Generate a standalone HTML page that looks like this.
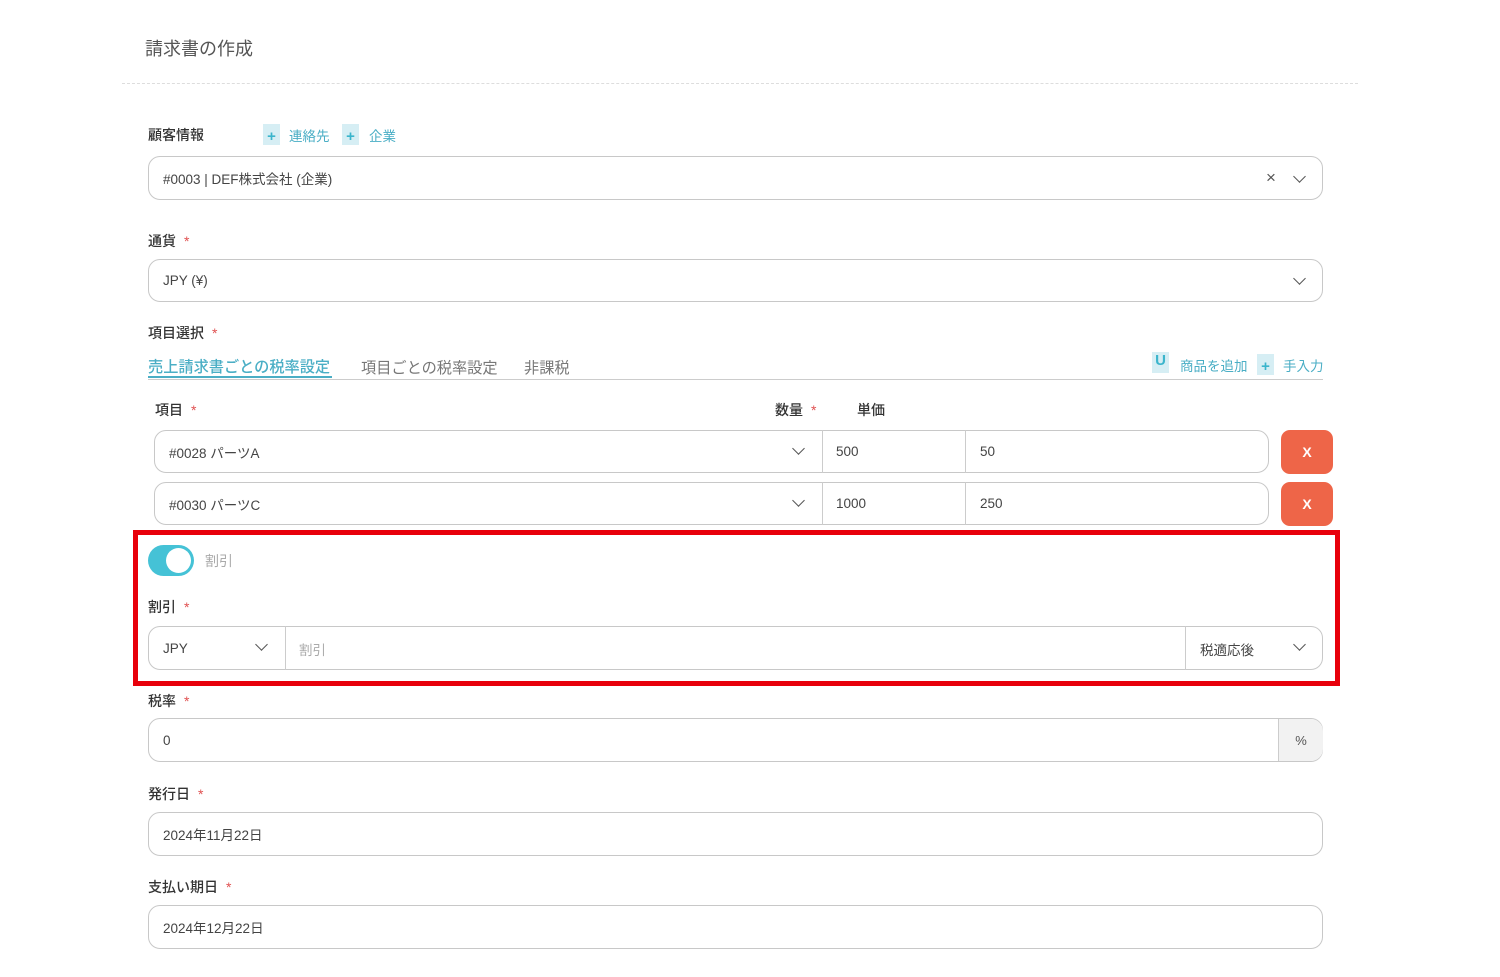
<!DOCTYPE html><html><head><meta charset="utf-8"><style>
body{margin:0;width:1500px;height:977px;background:#fff;font-family:"Liberation Sans","Noto Sans CJK JP",sans-serif;color:#333;position:relative;overflow:hidden}
.a{position:absolute}
.lbl{font-size:14px;color:#333;font-weight:500}
.req{color:#e05050;margin-left:8px}
.in{position:absolute;border:1px solid #c8c8c8;border-radius:12px;box-sizing:border-box;font-size:13.5px;color:#444;display:flex;align-items:center;padding-left:14px}
.chev{position:absolute;width:8px;height:8px;border-right:1.5px solid #555;border-bottom:1.5px solid #555;transform:rotate(45deg)}
.ic{position:absolute;width:17px;height:21px;background:#d6eef4;color:#3bb5cc;font-weight:bold;text-align:center;line-height:26px;font-size:15px}
.lnk{position:absolute;color:#4aaec5;font-size:13.5px}
.xb{position:absolute;left:1281px;width:52px;height:44px;background:#ee6548;border-radius:9px;color:#fff;font-weight:bold;font-size:14px;display:flex;align-items:center;justify-content:center}
.v{position:absolute;font-size:13.5px;color:#444}
</style></head><body>
<div class="a" style="left:145px;top:35px;font-size:18px;color:#555">請求書の作成</div>
<div class="a" style="left:122px;top:83px;width:1236px;border-top:1px dashed #ddd"></div>

<div class="a lbl" style="left:148px;top:125px">顧客情報</div>
<span class="ic" style="left:263px;top:124px">+</span><span class="lnk" style="left:289px;top:125px">連絡先</span>
<span class="ic" style="left:342px;top:124px">+</span><span class="lnk" style="left:369px;top:125px">企業</span>
<div class="in" style="left:148px;top:156px;width:1175px;height:44px">#0003 | DEF株式会社 (企業)</div>
<div class="a" style="left:1266px;top:168px;font-size:17px;color:#555">×</div>
<div class="chev" style="left:1295px;top:172px"></div>

<div class="a lbl" style="left:148px;top:231px">通貨<span class="req">*</span></div>
<div class="in" style="left:148px;top:259px;width:1175px;height:43px">JPY (¥)</div>
<div class="chev" style="left:1295px;top:274px"></div>

<div class="a lbl" style="left:148px;top:323px">項目選択<span class="req">*</span></div>
<div class="a" style="left:148px;top:355px;font-size:15.2px;color:#4aaec5;font-weight:500">売上請求書ごとの税率設定</div>
<div class="a" style="left:148px;top:376px;width:184px;height:2px;background:#4aaec5"></div>
<div class="a" style="left:361px;top:356px;font-size:15.2px;color:#777">項目ごとの税率設定</div>
<div class="a" style="left:524px;top:356px;font-size:15.2px;color:#777">非課税</div>
<div class="a" style="left:148px;top:379px;width:1175px;height:1px;background:#ccc"></div>
<span class="ic" style="left:1152px;top:352px;line-height:18px">U</span><span class="lnk" style="left:1180px;top:355px">商品を追加</span>
<span class="ic" style="left:1257px;top:354px">+</span><span class="lnk" style="left:1283px;top:355px">手入力</span>

<div class="a lbl" style="left:155px;top:400px">項目<span class="req">*</span></div>
<div class="a lbl" style="left:775px;top:400px">数量<span class="req">*</span></div>
<div class="a lbl" style="left:857px;top:400px">単価</div>

<div class="in" style="left:154px;top:430px;width:1115px;height:43px">#0028 パーツA</div>
<div class="chev" style="left:794px;top:444px"></div>
<div class="a" style="left:822px;top:430px;width:1px;height:43px;background:#ccc"></div>
<div class="a" style="left:965px;top:430px;width:1px;height:43px;background:#ccc"></div>
<div class="v" style="left:836px;top:444px">500</div>
<div class="v" style="left:980px;top:444px">50</div>
<div class="xb" style="top:430px">X</div>

<div class="in" style="left:154px;top:482px;width:1115px;height:43px">#0030 パーツC</div>
<div class="chev" style="left:794px;top:496px"></div>
<div class="a" style="left:822px;top:482px;width:1px;height:43px;background:#ccc"></div>
<div class="a" style="left:965px;top:482px;width:1px;height:43px;background:#ccc"></div>
<div class="v" style="left:836px;top:496px">1000</div>
<div class="v" style="left:980px;top:496px">250</div>
<div class="xb" style="top:482px">X</div>

<div class="a" style="left:133px;top:530px;width:1207px;height:156px;border:5px solid #e8000b;box-sizing:border-box"></div>
<div class="a" style="left:148px;top:545px;width:46px;height:31px;border-radius:16px;background:#45c2d6"></div>
<div class="a" style="left:166px;top:548px;width:25px;height:25px;border-radius:50%;background:#fff"></div>
<div class="a" style="left:205px;top:551px;font-size:14px;color:#aaa">割引</div>
<div class="a lbl" style="left:148px;top:597px">割引<span class="req">*</span></div>
<div class="in" style="left:148px;top:626px;width:1175px;height:44px">JPY</div>
<div class="chev" style="left:257px;top:640px"></div>
<div class="a" style="left:285px;top:626px;width:1px;height:44px;background:#ccc"></div>
<div class="a" style="left:299px;top:639px;font-size:13.5px;color:#aaa">割引</div>
<div class="a" style="left:1185px;top:626px;width:1px;height:44px;background:#ccc"></div>
<div class="a" style="left:1200px;top:639px;font-size:13.5px;color:#444">税適応後</div>
<div class="chev" style="left:1295px;top:640px"></div>

<div class="a lbl" style="left:148px;top:691px">税率<span class="req">*</span></div>
<div class="in" style="left:148px;top:718px;width:1175px;height:44px">0</div>
<div class="a" style="left:1278px;top:719px;width:44px;height:42px;background:#f2f2f2;border-left:1px solid #ccc;border-radius:0 12px 12px 0;font-size:13px;color:#555;display:flex;align-items:center;justify-content:center">%</div>

<div class="a lbl" style="left:148px;top:784px">発行日<span class="req">*</span></div>
<div class="in" style="left:148px;top:812px;width:1175px;height:44px">2024年11月22日</div>
<div class="a lbl" style="left:148px;top:877px">支払い期日<span class="req">*</span></div>
<div class="in" style="left:148px;top:905px;width:1175px;height:44px">2024年12月22日</div>
</body></html>
